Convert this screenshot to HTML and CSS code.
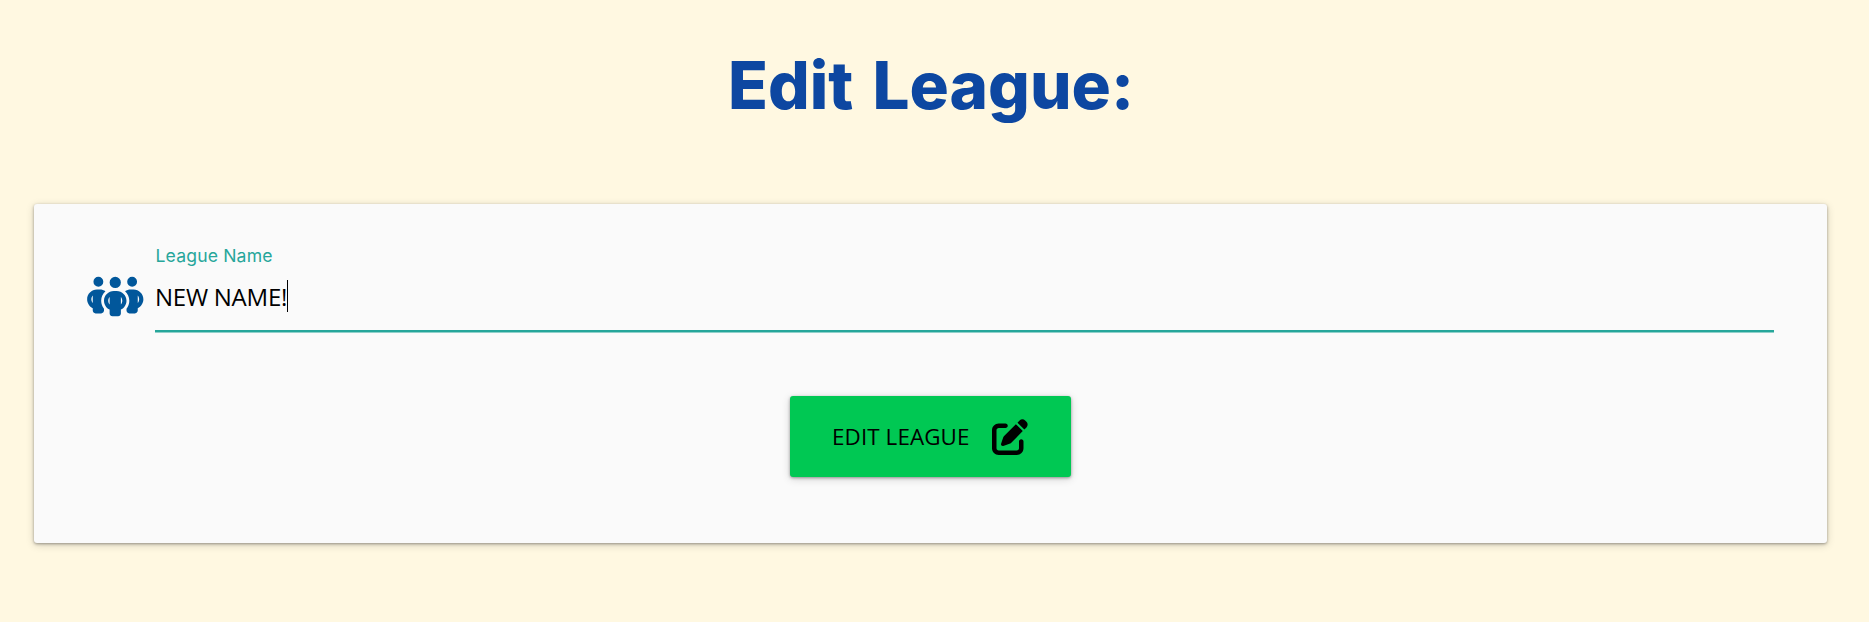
FILE: index.html
```html
<!DOCTYPE html>
<html lang="en">
<head>
<meta charset="utf-8">
<title>Edit League</title>
<link rel="stylesheet" href="styles.css">
</head>
<body>
<main class="page">
  <h1 class="title">Edit League:</h1>
  <form class="card">
    <div class="field">
      <svg class="field-icon" viewBox="0 0 640 512" fill="currentColor" aria-hidden="true"><path d="M72 88a56 56 0 1 1 112 0A56 56 0 1 1 72 88zM64 245.700C54 256.900 48 271.800 48 288s6 31.100 16 42.300V245.700zm144.400-49.300C178.700 222.700 160 261.200 160 304c0 34.300 12 65.800 32 90.500V416c0 17.700-14.300 32-32 32H96c-17.700 0-32-14.300-32-32V389.200C26.200 371.200 0 332.700 0 288c0-61.900 50.100-112 112-112h32c24 0 46.200 7.500 64.400 20.300zM448 416V394.500c20-24.700 32-56.200 32-90.500c0-42.800-18.700-81.300-48.400-107.700C449.800 183.500 472 176 496 176h32c61.900 0 112 50.100 112 112c0 44.700-26.200 83.200-64 101.200V416c0 17.700-14.300 32-32 32H480c-17.700 0-32-14.300-32-32zm8-328a56 56 0 1 1 112 0A56 56 0 1 1 456 88zM576 245.700v84.700c10-11.300 16-26.200 16-42.300s-6-31.100-16-42.300zM320 32a64 64 0 1 1 0 128 64 64 0 1 1 0-128zM240 304c0 16.200 6 31 16 42.300V261.700c-10 11.300-16 26.100-16 42.300zm144-42.300v84.700c10-11.300 16-26.100 16-42.300s-6-31.100-16-42.300zM448 304c0 44.700-26.200 83.200-64 101.200V448c0 17.700-14.300 32-32 32H288c-17.700 0-32-14.300-32-32V405.200c-37.800-18-64-56.500-64-101.200c0-61.900 50.100-112 112-112h32c61.900 0 112 50.100 112 112z"/></svg>
      <div class="field-body">
        <span class="field-label">League Name</span>
        <div class="field-input"><span class="field-value">NEW NAME!</span><span class="caret"></span></div>
      </div>
    </div>
    <button class="submit" type="button">
      <span class="submit-text">EDIT LEAGUE</span>
      <svg class="submit-icon" viewBox="0 0 512 512" fill="currentColor" aria-hidden="true"><path d="M471.600 21.700c-21.900-21.900-57.300-21.900-79.200 0L362.300 51.700l97.900 97.900 30.100-30.100c21.900-21.900 21.900-57.300 0-79.200L471.600 21.700zm-299.200 220c-6.100 6.100-10.800 13.600-13.500 21.900l-29.600 88.800c-2.900 8.600-.6 18.100 5.800 24.600s15.900 8.700 24.600 5.800l88.800-29.600c8.200-2.700 15.700-7.400 21.900-13.500L437.700 172.300 339.700 74.300 172.400 241.700zM96 64C43 64 0 107 0 160V416c0 53 43 96 96 96H352c53 0 96-43 96-96V320c0-17.700-14.300-32-32-32s-32 14.300-32 32v96c0 17.700-14.300 32-32 32H96c-17.700 0-32-14.300-32-32V160c0-17.700 14.300-32 32-32h96c17.700 0 32-14.300 32-32s-14.300-32-32-32H96z"/></svg>
    </button>
  </form>
</main>
</body>
</html>
```
FILE: styles.css
```css
* { box-sizing: border-box; }

body {
  margin: 0;
  height: 622px;
  overflow: hidden;
  background: #fff8e1;
}

.page {
  padding: 50px 42px 0 34px;
}

.title {
  margin: 0 0 82px;
  padding-left: 1px;
  font: 800 65.500px/72px Inter, sans-serif;
  word-spacing: 5px;
  color: #0d47a1;
  text-align: center;
}

.card {
  display: flex;
  flex-direction: column;
  align-items: center;
  height: 339px;
  padding: 42px 53px 0;
  border-radius: 3px;
  background: #fafafa;
  box-shadow: 0 1px 3px 0 rgba(0, 0, 0, 0.35), 0 2px 8px 0 rgba(0, 0, 0, 0.16);
}

.field {
  display: flex;
  align-self: stretch;
  gap: 11.500px;
}

.field-icon {
  flex: none;
  width: 56.500px;
  height: 45px;
  margin-top: 27.500px;
  color: #01579b;
}

.field-body { flex: 1; }

.field-label {
  display: block;
  padding-left: 0.5px;
  font: 400 17.600px/20px Inter, sans-serif;
  letter-spacing: 0.15px;
  color: #26a69a;
}

.field-input {
  display: flex;
  align-items: center;
  height: 66px;
  padding-bottom: 4px;
  border-bottom: 2px solid #26a69a;
  box-shadow: 0 1px 0 0 rgba(38, 166, 154, 0.5);
}

.field-value {
  padding-top: 1px;
  font: 400 24px/34px "Open Sans", sans-serif;
  letter-spacing: -0.25px;
  color: #000;
}

.caret {
  width: 1px;
  height: 32px;
  background: #000;
}

.submit {
  display: flex;
  align-items: center;
  gap: 22px;
  width: 281px;
  height: 81px;
  margin-top: 64px;
  padding: 0 0 0 42px;
  border: 0;
  border-radius: 3px;
  background: #00c853;
  color: #000;
  box-shadow: 0 1px 3px 0 rgba(0, 0, 0, 0.35), 0 2px 8px 0 rgba(0, 0, 0, 0.16);
}

.submit-text {
  font: 400 22.400px/32px "Open Sans", sans-serif;
  letter-spacing: 0.1px;
}

.submit-icon {
  width: 36px;
  height: 36px;
}
```
